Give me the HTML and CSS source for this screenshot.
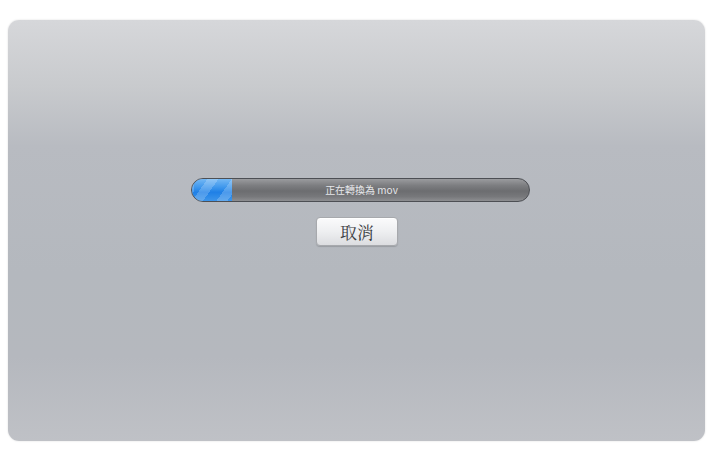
FILE: index.html
```html
<!DOCTYPE html>
<html lang="zh-Hant">
<head>
<meta charset="utf-8">
<link rel="stylesheet" href="styles.css">
</head>
<body>
<div class="panel">
  <div class="progress">
    <div class="fill"></div>
    <span class="label">正在轉換為 mov</span>
  </div>
  <button class="cancel">取消</button>
</div>
</body>
</html>
```
FILE: styles.css
```css
html, body { margin: 0; padding: 0; background: #fff; }
body { width: 720px; height: 457px; overflow: hidden; }
.panel {
  margin: 20px 15px 0 8px;
  height: 421px;
  border-radius: 11px;
  background: linear-gradient(to bottom, #d6d7da 0%, #c8cacd 16%, #b8bbc1 30%, #b4b8be 60%, #b5b8be 80%, #bfc1c6 100%);
  box-shadow: 0 0 2px rgba(0,0,0,0.15);
  display: flex;
  flex-direction: column;
  align-items: center;
  padding-top: 158px;
  box-sizing: border-box;
}
.progress {
  position: relative;
  width: 339px;
  height: 24px;
  box-sizing: border-box;
  border: 1px solid #4d4f54;
  border-radius: 12px;
  overflow: hidden;
  background: linear-gradient(to bottom, #9a9b9e 0%, #7c7d80 30%, #6c6d70 55%, #77787b 80%, #8d8e91 100%);
  display: flex;
  align-items: center;
  justify-content: center;
  margin-left: 8px;
}
.fill {
  position: absolute;
  left: 0; top: 0; bottom: 0;
  width: 40px;
  background:
    repeating-linear-gradient(125deg, rgba(255,255,255,0) 0px, rgba(255,255,255,0) 11px, rgba(255,255,255,0.2) 11px, rgba(255,255,255,0.2) 20px),
    linear-gradient(to bottom, #74b8f4 0%, #3b95ec 40%, #1f80e6 60%, #3d95ea 100%);
  background-position: 2px 0, 0 0;
}
.label {
  position: relative;
  font-family: "Noto Sans CJK TC", "Liberation Sans", sans-serif;
  font-size: 10px;
  color: #e6e7ea;
  line-height: 1;
  margin-left: 2px;
}
.cancel {
  margin-top: 15px;
  width: 82px;
  height: 29px;
  border: 1px solid #a7a9ad;
  border-radius: 4px;
  background: linear-gradient(to bottom, #fbfbfc 0%, #eeeff1 50%, #dcdde0 100%);
  box-shadow: 0 1px 1px rgba(0,0,0,0.15), inset 0 1px 0 #fff;
  font-family: "Noto Serif CJK TC", "Noto Sans CJK TC", serif;
  font-size: 17px;
  color: #3a3c42;
  padding: 0;
  margin-left: 1px;
}
```
